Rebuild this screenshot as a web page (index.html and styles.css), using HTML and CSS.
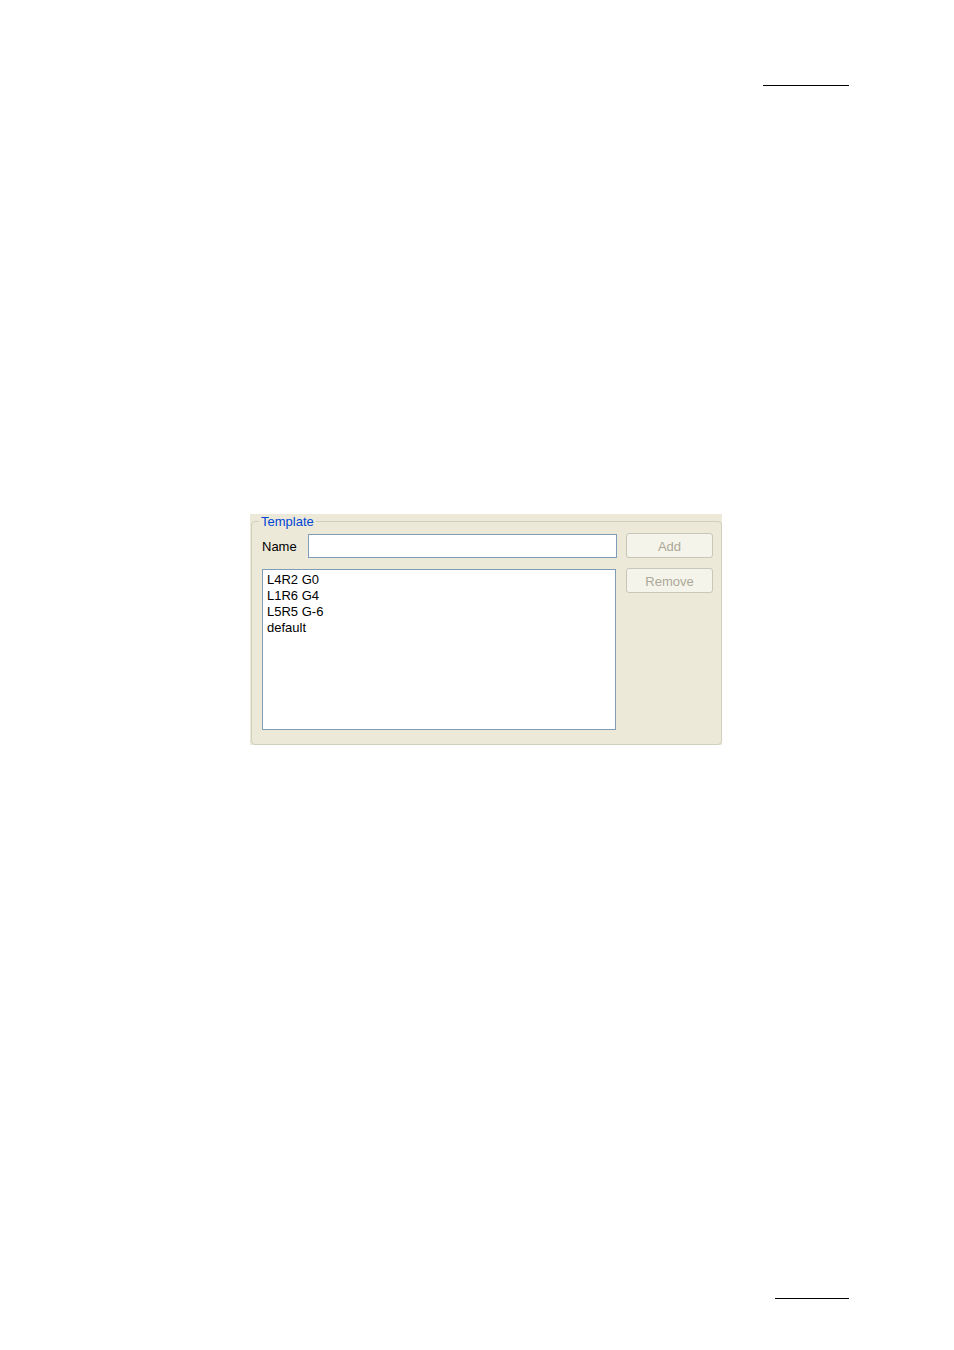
FILE: index.html
```html
<!DOCTYPE html>
<html>
<head>
<meta charset="utf-8">
<link rel="stylesheet" href="styles.css">
</head>
<body>
<div class="page">
  <div class="rule rule-top"></div>
  <div class="panel">
    <div class="group">
      <span class="legend">Template</span>
      <div class="grid">
        <div class="name-row">
          <span class="label">Name</span>
          <div class="textbox"></div>
        </div>
        <div class="btn">Add</div>
        <div class="list">
          <div>L4R2 G0</div>
          <div>L1R6 G4</div>
          <div>L5R5 G-6</div>
          <div>default</div>
        </div>
        <div class="btn">Remove</div>
      </div>
    </div>
  </div>
  <div class="rule rule-bottom"></div>
</div>
</body>
</html>
```

FILE: styles.css
```css
html, body {
  margin: 0;
  padding: 0;
  background: #ffffff;
}
.page {
  width: 954px;
  height: 1350px;
  overflow: hidden;
  font-family: "Liberation Sans", Arial, sans-serif;
  font-size: 13px;
  line-height: 16px;
  color: #000;
}
.rule {
  height: 0;
  border-top: 1px solid #000;
}
.rule-top {
  margin: 85px 0 0 763px;
  width: 86px;
}
.rule-bottom {
  margin: 553px 0 0 775px;
  width: 74px;
}
.panel {
  margin: 428px 0 0 250px;
  width: 472px;
  height: 231px;
  background: #ECE9D8;
  box-sizing: border-box;
  padding: 7px 0 0 1px;
}
.group {
  position: relative;
  box-sizing: border-box;
  width: 471px;
  height: 224px;
  border: 1px solid #D0D0BF;
  border-radius: 4px;
  padding: 11px 0 0 10px;
}
.legend {
  position: absolute;
  left: 7px;
  top: -8px;
  padding: 0 2px;
  background: #ECE9D8;
  color: #0046D5;
}
.grid {
  display: grid;
  grid-template-columns: 355px 87px;
  column-gap: 9px;
  row-gap: 10px;
  align-items: start;
}
.name-row {
  display: flex;
  align-items: center;
  height: 25px;
}
.label {
  width: 46px;
  flex: none;
  padding-top: 2px;
}
.textbox {
  box-sizing: border-box;
  width: 309px;
  height: 24px;
  margin-top: 1px;
  background: #fff;
  border: 1px solid #7F9DB9;
}
.btn {
  box-sizing: border-box;
  height: 25px;
  padding-top: 2px;
  border: 1px solid #C9C7BA;
  border-radius: 3px;
  background: #F5F4EA;
  color: #ACA899;
  display: flex;
  align-items: center;
  justify-content: center;
}
.list {
  box-sizing: border-box;
  width: 354px;
  height: 161px;
  margin-top: 1px;
  background: #fff;
  border: 1px solid #7F9DB9;
  padding: 2px 4px;
}
```
